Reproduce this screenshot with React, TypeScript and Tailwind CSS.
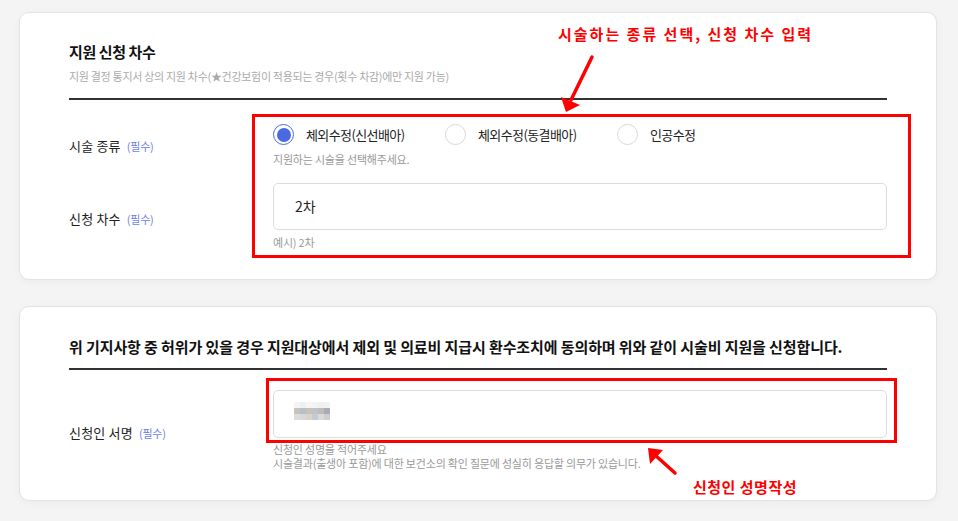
const pixelRows = [
  ["#f4f4f4", "#eef0f2", "#f6f5f3", "#f3f4f6", "#f0f0f0", "#f2f2f2"],
  ["#c8c3bd", "#b9bfc9", "#c8c2bb", "#c0c2c8", "#bdbbbc", "#a8acb3"],
  ["#dcdcdc", "#d6d8dc", "#dbd3c8", "#c3ccd6", "#dcdad6", "#cbced3"],
];

function Required() {
  return <span className="ml-[6px] text-[11px] tracking-[-0.2px] text-[#6c7fe0]">(필수)</span>;
}

function Radio({ label, checked, wide }: { label: string; checked?: boolean; wide?: boolean }) {
  return (
    <label className={`flex items-center gap-[12px] ${wide ? "w-[172px]" : ""}`}>
      {checked ? (
        <span className="flex h-[21px] w-[21px] items-center justify-center rounded-full border-[1.5px] border-[#4a69e2] bg-white">
          <span className="h-[14px] w-[14px] rounded-full bg-[#4a69e2]" />
        </span>
      ) : (
        <span className="h-[21px] w-[21px] rounded-full border border-[#d8d8d8] bg-white" />
      )}
      <span className="text-[13px] leading-[20px] tracking-[-0.6px] text-[#222]">{label}</span>
    </label>
  );
}

export default function App() {
  return (
    <div className="relative min-h-[521px] bg-[#f4f4f4] pl-[19px] pr-[21px] pt-[12px] pb-[21px] font-['Noto_Sans_CJK_KR','Noto_Sans',sans-serif]">
      {/* 카드 1: 지원 신청 차수 */}
      <section className="rounded-[10px] border border-[#e3e3e3] bg-white px-[49px] pt-[28px] pb-[29px] shadow-[0_2px_8px_rgba(0,0,0,0.04)]">
        <h2 className="text-[15px] font-bold leading-[22px] tracking-[-0.4px] text-[#111]">지원 신청 차수</h2>
        <p className="mt-[5px] text-[11px] leading-[16px] tracking-[-0.3px] text-[#aaa]">
          지원 결정 통지서 상의 지원 차수(★건강보험이 적용되는 경우(횟수 차감)에만 지원 가능)
        </p>
        <div className="mt-[14px] h-[2px] bg-[#333]" />

        <div className="mt-[24px] flex items-center">
          <div className="w-[204px] text-[13px] tracking-[0.2px] text-[#222]">
            시술 종류
            <Required />
          </div>
          <div className="flex-1">
            <div className="flex items-center">
              <Radio label="체외수정(신선배아)" checked wide />
              <Radio label="체외수정(동결배아)" wide />
              <Radio label="인공수정" />
            </div>
            <p className="mt-[6px] text-[11px] leading-[16px] tracking-[-0.2px] text-[#999]">
              지원하는 시술을 선택해주세요.
            </p>
          </div>
        </div>

        <div className="mt-[16px] flex items-center">
          <div className="mt-[5px] w-[204px] text-[13px] tracking-[0.2px] text-[#222]">
            신청 차수
            <Required />
          </div>
          <div className="flex-1">
            <div className="flex h-[47px] items-center rounded-[5px] border border-[#dcdcdc] pl-[21px] text-[14px] text-[#222]">
              2차
            </div>
            <p className="mt-[4px] text-[11px] leading-[16px] tracking-[-0.2px] text-[#999]">예시) 2차</p>
          </div>
        </div>
      </section>

      {/* 카드 2: 서명 */}
      <section className="mt-[26px] rounded-[10px] border border-[#e3e3e3] bg-white px-[49px] pt-[29px] pb-[30px] shadow-[0_2px_8px_rgba(0,0,0,0.04)]">
        <h2 className="text-[15px] font-bold leading-[22px] tracking-[-0.1px] text-[#111]">
          위 기지사항 중 허위가 있을 경우 지원대상에서 제외 및 의료비 지급시 환수조치에 동의하며 위와 같이 시술비 지원을 신청합니다.
        </h2>
        <div className="mt-[10px] h-[2px] bg-[#333]" />

        <div className="mt-[20px] flex items-center">
          <div className="mt-[6px] w-[204px] text-[13px] tracking-[0.2px] text-[#222]">
            신청인 서명
            <Required />
          </div>
          <div className="flex-1">
            <div className="flex h-[48px] items-center rounded-[5px] border border-[#dcdcdc] pl-[20px]">
              <div className="mb-[6px] flex flex-col">
                {pixelRows.map((row, i) => (
                  <div key={i} className="flex">
                    {row.map((c, j) => (
                      <span key={j} className="h-[6px] w-[6px]" style={{ backgroundColor: c }} />
                    ))}
                  </div>
                ))}
              </div>
            </div>
            <div className="mt-[4px] text-[11px] leading-[14px] tracking-[-0.2px] text-[#999]">
              <p>신청인 성명을 적어주세요</p>
              <p>시술결과(출생아 포함)에 대한 보건소의 확인 질문에 성실히 응답할 의무가 있습니다.</p>
            </div>
          </div>
        </div>
      </section>

      {/* 안내 표시 */}
      <div className="absolute left-[252px] top-[114px] h-[144px] w-[659px] border-[3px] border-[#ff0000]" />
      <div className="absolute left-[266px] top-[378px] h-[65px] w-[631px] border-[3px] border-[#ff0000]" />
      <p className="absolute left-[558px] top-[24px] text-[15px] font-bold leading-[20px] tracking-[2px] text-[#ff0000]">
        시술하는 종류 선택, 신청 차수 입력
      </p>
      <p className="absolute left-[693px] top-[477px] text-[15px] font-bold leading-[20px] tracking-[0.5px] text-[#ff0000]">
        신청인 성명작성
      </p>
      <svg className="pointer-events-none absolute left-0 top-0" width="958" height="521">
        <line x1="592" y1="57" x2="571" y2="100" stroke="#ff0000" strokeWidth="3.5" strokeLinecap="round" />
        <polygon points="561,97 580,105 566,112" fill="#ff0000" />
        <line x1="675" y1="473" x2="655" y2="455" stroke="#ff0000" strokeWidth="3.5" strokeLinecap="round" />
        <polygon points="648,448 663,450 650,464" fill="#ff0000" />
      </svg>
    </div>
  );
}
